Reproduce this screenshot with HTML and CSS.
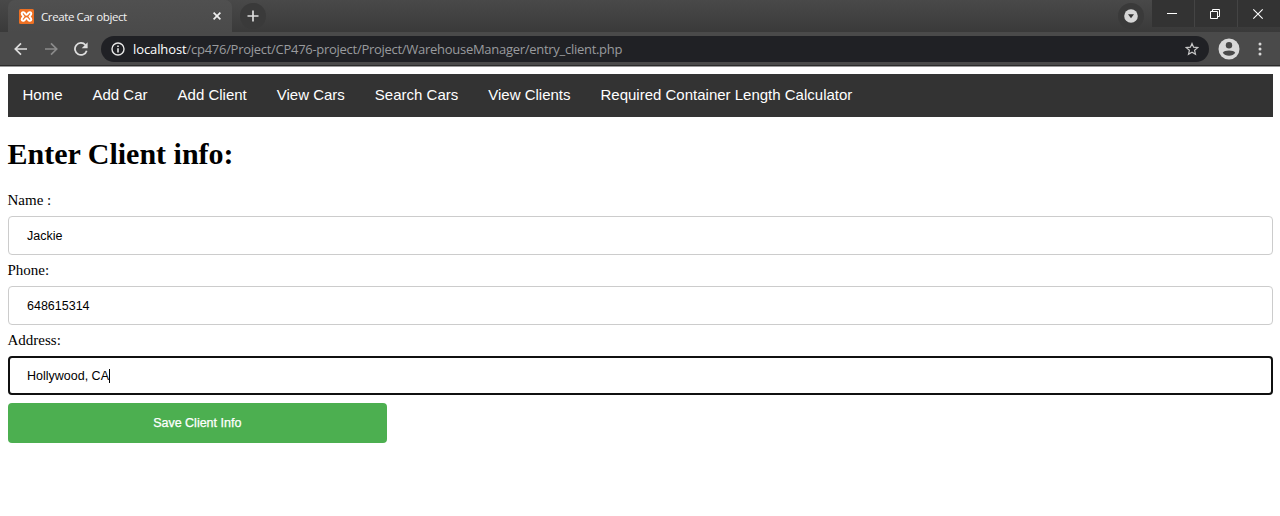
FILE: index.html
```html
<!DOCTYPE html>
<html lang="en">
<head>
<meta charset="utf-8">
<title>Create Car object</title>
<link rel="stylesheet" href="styles.css">
</head>
<body>
<header class="browser">
  <div class="tabstrip">
    <div class="tab-lead"></div>
    <div class="tab">
      <svg class="favicon" width="15" height="15" viewBox="0 0 15 15"><rect width="15" height="15" rx="1.5" fill="#ee7023"/><path d="M5 3.4C3.3 2.6 2.2 4 3 5.6C3.4 6.4 4 6.8 4.4 7.5C4 8.2 3.4 8.6 3 9.4C2.2 11 3.3 12.4 5 11.6C6.2 11.1 6 9.3 7.5 9.3C9 9.3 8.8 11.1 10 11.6C11.7 12.4 12.8 11 12 9.4C11.6 8.6 11 8.2 10.6 7.5C11 6.8 11.6 6.4 12 5.6C12.8 4 11.7 2.6 10 3.4C8.8 3.9 9 5.7 7.5 5.7C6 5.7 6.2 3.9 5 3.4Z" fill="none" stroke="#fff" stroke-width="2"/></svg>
      <span class="tab-title">Create Car object</span>
      <svg class="tab-close" width="10" height="10" viewBox="0 0 10 10"><path d="M1.6 1.6L8.4 8.4M8.4 1.6L1.6 8.4" stroke="#eee" stroke-width="1.7"/></svg>
    </div>
    <div class="new-tab"><svg width="12" height="12" viewBox="0 0 12 12"><path d="M6 .5V11.5M.5 6H11.5" stroke="#ddd" stroke-width="1.7"/></svg></div>
    <div class="tab-search"><svg width="14" height="14" viewBox="0 0 14 14"><circle cx="7" cy="7" r="6.8" fill="#d6d6d6"/><path d="M4 5.2H10L7 9.2Z" fill="#333"/></svg></div>
    <div class="window-controls">
      <span class="control"><svg width="12" height="12" viewBox="0 0 12 12"><path d="M1 5.5H11" stroke="#fff"/></svg></span>
      <span class="control"><svg width="12" height="12" viewBox="0 0 12 12"><path d="M1.5 3.5H8.5V10.5H1.5ZM3.5 3V1.5H10.5V8.5H9" fill="none" stroke="#fff"/></svg></span>
      <span class="control"><svg width="12" height="12" viewBox="0 0 12 12"><path d="M1.3 1.3L10.7 10.7M10.7 1.3L1.3 10.7" stroke="#fff" stroke-width="1.1"/></svg></span>
    </div>
  </div>
  <div class="toolbar">
    <svg class="back" width="14" height="14" viewBox="0 0 14 14"><path d="M13 7H1.5M7 1.3L1.3 7L7 12.7" fill="none" stroke="#dedede" stroke-width="1.7"/></svg>
    <svg class="forward" width="14" height="14" viewBox="0 0 14 14"><path d="M1 7H12.5M7 1.3L12.7 7L7 12.7" fill="none" stroke="#8b8b8b" stroke-width="1.7"/></svg>
    <svg class="reload" width="14" height="14" viewBox="0 0 14 14"><path d="M12.7 8.7A6 6 0 1 1 11.5 3" fill="none" stroke="#dedede" stroke-width="1.8"/><path d="M13.6.3V6.2H7.7Z" fill="#dedede"/></svg>
    <div class="address">
      <svg class="info" width="14" height="14" viewBox="0 0 14 14"><circle cx="7" cy="7" r="6" fill="none" stroke="#e8e8e8" stroke-width="1.4"/><path d="M7 6.2V10.5M7 3.4V5" stroke="#e8e8e8" stroke-width="1.6"/></svg>
      <span class="url"><span class="host">localhost</span><span class="path">/cp476/Project/CP476-project/Project/WarehouseManager/entry_client.php</span></span>
      <svg class="star" width="14" height="14" viewBox="0 0 14 14"><path d="M7 1.5L8.6 5.2L12.7 5.6L9.6 8.3L10.5 12.3L7 10.2L3.5 12.3L4.4 8.3L1.3 5.6L5.4 5.2Z" fill="none" stroke="#c8c8c8" stroke-width="1.2"/></svg>
    </div>
    <svg class="profile" width="22" height="22" viewBox="0 0 22 22"><circle cx="11" cy="11" r="10.5" fill="#d8d8d8"/><circle cx="11" cy="7.2" r="3.2" fill="#484848"/><path d="M4.8 14.8C6 11.8 16 11.8 17.2 14.8C15 18.8 7 18.8 4.8 14.8Z" fill="#484848"/></svg>
    <svg class="more" width="4" height="14" viewBox="0 0 4 14"><circle cx="2" cy="2" r="1.5" fill="#d8d8d8"/><circle cx="2" cy="7" r="1.5" fill="#d8d8d8"/><circle cx="2" cy="12" r="1.5" fill="#d8d8d8"/></svg>
  </div>
</header>
<main class="page">
  <nav class="menu">
    <a>Home</a><a>Add Car</a><a>Add Client</a><a>View Cars</a><a>Search Cars</a><a>View Clients</a><a>Required Container Length Calculator</a>
  </nav>
  <h1 class="heading">Enter Client info:</h1>
  <form class="form">
    <label class="label">Name :</label>
    <div class="field">Jackie</div>
    <label class="label">Phone:</label>
    <div class="field">648615314</div>
    <label class="label">Address:</label>
    <div class="field field-focused">Hollywood, CA<span class="caret"></span></div>
    <button class="save" type="button">Save Client Info</button>
  </form>
</main>
</body>
</html>
```
FILE: styles.css
```css
* { box-sizing: border-box; }
body { margin: 0; height: 516px; overflow: hidden; background: #fff; }
svg { display: block; flex: none; }

.browser { height: 67px; font-family: "Open Sans", "Noto Sans", sans-serif; background: #4a4a4a; border-bottom: 1px solid #999; }
.tabstrip { display: flex; height: 32px; background: linear-gradient(#494949, #3a3a3a); }
.tab-lead { width: 8px; border-bottom-right-radius: 7px; }
.tab { display: flex; align-items: center; width: 224px; padding: 0 10px 0 11px; background: linear-gradient(#505050, #4a4a4a); border-radius: 7px 7px 0 0; }
.tab-title { flex: 1; margin-left: 7px; font-size: 11.5px; letter-spacing: -.4px; color: #f2f2f2; white-space: nowrap; }
.new-tab, .tab-search { display: flex; align-items: center; justify-content: center; width: 26px; height: 26px; margin: 3px 0 0 8px; border-radius: 50%; background: #3a3a3a; }
.tab-search { margin-left: auto; margin-right: 8px; }
.window-controls { display: flex; gap: 1px; height: 27px; background: #444; }
.control { display: flex; align-items: center; justify-content: center; width: 42px; padding-right: 2px; background: #333; }

.toolbar { display: flex; align-items: center; height: 34px; padding: 0 18px 0 14px; border-bottom: 1px solid #2b2b2b; }
.forward { margin-left: 16px; }
.reload { margin-left: 16px; }
.address { display: flex; align-items: center; width: 1108px; height: 26px; margin-left: 13px; padding: 0 10px; background: #202125; border-radius: 13px; }
.url { flex: 1; margin-left: 8px; font-size: 13px; line-height: 26px; white-space: nowrap; }
.host { color: #fff; letter-spacing: -.1px; }
.path { color: #999b9e; letter-spacing: -.28px; }
.profile { margin-left: 9px; }
.more { margin-left: 18px; }

.page { padding: 7px 7.5px; font-family: "Liberation Serif", serif; color: #000; }
.menu { display: flex; height: 43px; background: #333; font: 15px/42px "Liberation Sans", sans-serif; color: #fff; }
.menu a { padding: 0 15px; }
.heading { margin: 20px 0 19px; font-size: 30px; line-height: 34px; }
.form { display: flex; flex-direction: column; }
.label { height: 17px; margin: 2px 0 7px; font-size: 15px; line-height: 17px; }
.field { display: flex; align-items: center; height: 39px; margin-bottom: 5px; padding: 1px 18.5px 0; border: 1px solid #ccc; border-radius: 4px; font: 12.5px "Liberation Sans", sans-serif; }
.field-focused { padding: 1px 17.5px 0; border: 2px solid #101010; }
.caret { width: 1px; height: 14px; background: #000; }
.save { width: 379.5px; height: 40px; margin-top: 2.5px; padding: 0; border: 0; border-radius: 4px; background: #4caf50; color: #fff; font: 12.5px "Liberation Sans", sans-serif; -webkit-text-stroke: .25px #fff; }
```
